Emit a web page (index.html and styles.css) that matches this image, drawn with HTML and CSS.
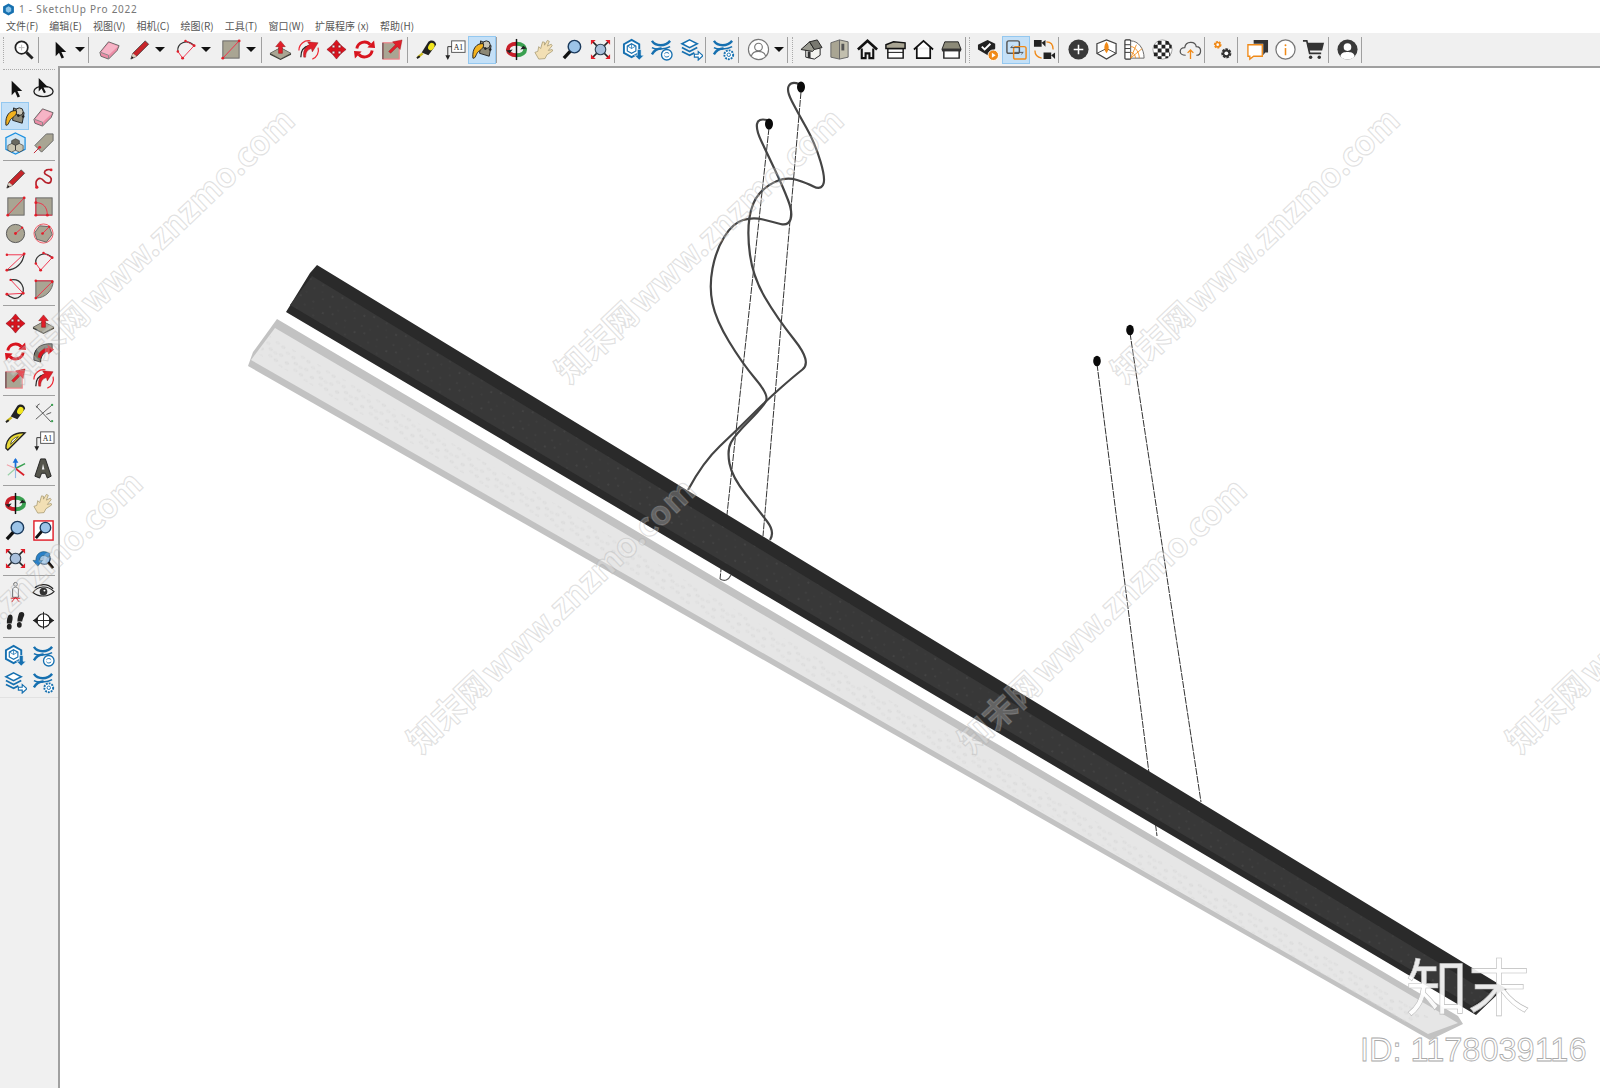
FILE: index.html
```html
<!DOCTYPE html>
<html>
<head>
    <meta charset="utf-8">
    <title>SketchUp Pro 2022</title>
    <link rel="stylesheet" href="styles.css">
</head>

<body>
    <!-- Icon set -->
    <svg class="defs" width="0" height="0">
        <defs>
            <pattern id="speck" width="37" height="19" patternUnits="userSpaceOnUse" patternTransform="rotate(31)">
                <circle cx="3" cy="3" r="0.6" fill="#5e5e5e"/>
                <circle cx="11" cy="9" r="0.5" fill="#525252"/>
                <circle cx="17" cy="2" r="0.4" fill="#6a6a6a"/>
                <circle cx="24" cy="14" r="0.6" fill="#4c4c4c"/>
                <circle cx="31" cy="7" r="0.5" fill="#6e6e6e"/>
                <circle cx="6" cy="16" r="0.4" fill="#555"/>
                <circle cx="20" cy="8" r="0.4" fill="#4a4a4a"/>
                <circle cx="34" cy="17" r="0.5" fill="#5a5a5a"/>
            </pattern>
            <pattern id="holes" width="29" height="15" patternUnits="userSpaceOnUse" patternTransform="rotate(30)">
                <ellipse cx="3" cy="2" rx="2" ry="1" fill="none" stroke="#d4d4d4" stroke-width="0.6"/>
                <ellipse cx="9" cy="3" rx="2" ry="1" fill="none" stroke="#dadada" stroke-width="0.6"/>
                <ellipse cx="15" cy="2" rx="2" ry="1" fill="none" stroke="#d6d6d6" stroke-width="0.6"/>
                <ellipse cx="24" cy="6" rx="2" ry="1" fill="none" stroke="#d2d2d2" stroke-width="0.6"/>
                <ellipse cx="6" cy="8" rx="2" ry="1" fill="none" stroke="#d8d8d8" stroke-width="0.6"/>
                <ellipse cx="13" cy="9" rx="2" ry="1" fill="none" stroke="#d4d4d4" stroke-width="0.6"/>
                <ellipse cx="20" cy="12" rx="2" ry="1" fill="none" stroke="#d8d8d8" stroke-width="0.6"/>
                <ellipse cx="27" cy="13" rx="2" ry="1" fill="none" stroke="#d6d6d6" stroke-width="0.6"/>
            </pattern>
        </defs>
        <symbol id="find" viewBox="0 0 24 24"><circle cx="10" cy="10" r="6.5" fill="#fff" stroke="#222" stroke-width="1.8"/><path d="M15 15l6.500 6.500" stroke="#222" stroke-width="3"/><path d="M10 7v6M7 10h6" stroke="#bbb"/></symbol>
        <symbol id="select" viewBox="0 0 24 24"><path d="M8 4v15l3.500-3.500 2.700 6 2.500-1.200-2.700-5.800H19z" fill="#111"/></symbol>
        <symbol id="eraser" viewBox="0 0 24 24"><path d="M2 15 11 4l11 4-2 5-9 9-8-3z" fill="#ec8ca6" stroke="#666"/><path d="M3 15 11.500 5 21 8.500 11 18z" fill="#f6b4c6"/><path d="M3 15l8 3v4" fill="none" stroke="#888"/></symbol>
        <symbol id="pencil" viewBox="0 0 24 24"><path d="M3 22l2-6L18 3l3.500 3.500L9 19z" fill="#c8252a" stroke="#333" stroke-width="0.8"/><path d="M3 22l2-6 4 3z" fill="#d8d0c0"/><path d="M3 22l1-3 2 1.500z" fill="#111"/></symbol>
        <symbol id="freehand" viewBox="0 0 24 24"><path d="M5 21C2 14 8 9 12 14c3 4 9 4 8-2-1-4-7-3-7-6 0-3 4-4 7-3" fill="none" stroke="#b5202a" stroke-width="1.800"/><circle cx="5" cy="21" r="1.700" fill="#e01f2a"/><circle cx="20" cy="3" r="1.400" fill="#e01f2a"/></symbol>
        <symbol id="rect" viewBox="0 0 24 24"><rect x="4" y="3" width="17" height="18" fill="#a9a593" stroke="#666"/><path d="M4 21 21 3" stroke="#f0304a"/><circle cx="4" cy="21" r="1.500" fill="#e01f2a"/><circle cx="21" cy="3" r="1.500" fill="#e01f2a"/></symbol>
        <symbol id="rrect" viewBox="0 0 24 24"><rect x="4" y="3" width="17" height="18" fill="#a9a593" stroke="#666"/><path d="M4 8c8 0 12 5 12 13M4 3v18h17" fill="none" stroke="#f0304a"/><circle cx="4" cy="8" r="1.500" fill="#e01f2a"/><circle cx="4" cy="21" r="1.500" fill="#e01f2a"/><circle cx="16" cy="21" r="1.500" fill="#e01f2a"/></symbol>
        <symbol id="circle" viewBox="0 0 24 24"><circle cx="12" cy="12" r="9.500" fill="#a9a593" stroke="#555"/><path d="M12 12l7-6" stroke="#f0304a"/><circle cx="12" cy="12" r="1.500" fill="#e01f2a"/><circle cx="19" cy="6" r="1.200" fill="#e01f2a"/></symbol>
        <symbol id="polygon" viewBox="0 0 24 24"><circle cx="12" cy="12" r="10" fill="#f6cfd2" stroke="#f0606a"/><path d="M8 4l10 1 3 8-6 8-10-3-2-7z" fill="#a9a593" stroke="#666"/><path d="M11 12l7-7" stroke="#f0304a"/><circle cx="11" cy="12" r="1.400" fill="#e01f2a"/><circle cx="18" cy="5" r="1.200" fill="#e01f2a"/></symbol>
        <symbol id="arc2" viewBox="0 0 24 24"><path d="M3 21C12 21 20 14 21 4" fill="none" stroke="#333" stroke-width="1.300"/><path d="M3 21 21 4M3 5h18" fill="none" stroke="#f0304a"/><circle cx="3" cy="21" r="1.500" fill="#e01f2a"/><circle cx="21" cy="4" r="1.500" fill="#e01f2a"/><circle cx="3" cy="5" r="1.300" fill="#e01f2a"/></symbol>
        <symbol id="arc3" viewBox="0 0 24 24"><path d="M4 14C3 6 13 0 21 8" fill="none" stroke="#333" stroke-width="1.300"/><path d="M4 14l5 7L21 8 12 3" fill="none" stroke="#f0304a"/><circle cx="9" cy="21" r="1.500" fill="#e01f2a"/><circle cx="21" cy="8" r="1.500" fill="#e01f2a"/><circle cx="4" cy="14" r="1.300" fill="#e01f2a"/><circle cx="12" cy="3" r="1.300" fill="#e01f2a"/></symbol>
        <symbol id="arc4" viewBox="0 0 24 24"><path d="M7 3C18 1 24 13 17 20 13 24 7 22 3 18" fill="none" stroke="#333" stroke-width="1.300"/><path d="M7 3l13 14-17 1" fill="none" stroke="#f0304a"/><circle cx="7" cy="3" r="1.300" fill="#e01f2a"/><circle cx="20" cy="17" r="1.500" fill="#e01f2a"/><circle cx="3" cy="18" r="1.500" fill="#e01f2a"/></symbol>
        <symbol id="pie" viewBox="0 0 24 24"><path d="M4 22V4h18C22 14 14 22 4 22z" fill="#a9a593" stroke="#666"/><path d="M4 22 21 5M4 4h18" stroke="#f0304a"/><circle cx="4" cy="22" r="1.400" fill="#e01f2a"/><circle cx="4" cy="4" r="1.400" fill="#e01f2a"/><circle cx="21" cy="5" r="1.400" fill="#e01f2a"/></symbol>
        <symbol id="pushpull" viewBox="0 0 24 24"><path d="M1 16l11-6 11 6v1.500L12 23 1 17.500z" fill="#3e3e36"/><path d="M1 16l11-6 11 6-11 6z" fill="#a9a593" stroke="#444" stroke-width="0.500"/><path d="M12 3l-5 6h3v7h4V9h3z" fill="#e01f2a" stroke="#811" stroke-width="0.500"/></symbol>
        <symbol id="follow" viewBox="0 0 24 24"><path d="M2 13A10 10 0 0 1 14 3M22 10A10 10 0 0 1 16 22" fill="none" stroke="#ee2a35" stroke-width="1.300"/><path d="M4 20C4 14 7 9 13 8" fill="none" stroke="#222" stroke-width="1.300"/><path d="M9 20c0-5 2-8 6-9l1 3.500L22 5 11 4l2 3c-5 2-7 7-6 13z" fill="#e01f2a" stroke="#811" stroke-width="0.400"/></symbol>
        <symbol id="move" viewBox="0 0 24 24"><path d="M12 2l4.500 5.500h-2.700v2.700h2.700V7.500L22 12l-5.500 4.500v-2.700h-2.700v2.700h2.700L12 22l-4.500-5.500h2.700v-2.700H7.500v2.700L2 12l5.500-4.500v2.700h2.700V7.500H7.500z" fill="#d8141e" stroke="#701" stroke-width="0.500"/></symbol>
        <symbol id="rotate" viewBox="0 0 24 24"><path d="M4 11A8 8 0 0 1 18 7M20 13A8 8 0 0 1 6 17" fill="none" stroke="#d8141e" stroke-width="3"/><path d="M15 10l8 .5-1-8zM9 14l-8-.5 1 8z" fill="#d8141e"/></symbol>
        <symbol id="scale" viewBox="0 0 24 24"><rect x="2" y="5" width="17" height="17" fill="#a9a593" stroke="#f08088" stroke-width="1.200"/><path d="M2 5v17" stroke="#333"/><path d="M8 14l7-7-3-3 10-2-2 10-3-3-7 7z" fill="#e01f2a" stroke="#811" stroke-width="0.400"/></symbol>
        <symbol id="tape" viewBox="0 0 24 24"><path d="M7 15 14 4c3-3 8-1 8 3l-8 11z" fill="#222"/><ellipse cx="17" cy="9" rx="3" ry="4" transform="rotate(30 17 9)" fill="#f2e61e"/><path d="M8 16l-5 4" stroke="#c8b818" stroke-width="2.500"/><path d="M2 21l3-2" stroke="#222" stroke-width="2"/></symbol>
        <symbol id="label" viewBox="0 0 24 24"><rect x="9" y="3" width="14" height="12" fill="#fff" stroke="#555"/><text x="16" y="12" font-family="Liberation Serif, serif" font-size="8" text-anchor="middle" fill="#222">A1</text><path d="M9 9H5v10" fill="none" stroke="#333"/><path d="M2.500 18h5L5 23z" fill="#222"/></symbol>
        <symbol id="paint" viewBox="0 0 24 24"><path d="M10 3l11 5-2 11-10-3z" fill="#8c8876" stroke="#222"/><circle cx="16" cy="7" r="4" fill="#c8c4b4" stroke="#222"/><circle cx="15" cy="11" r="1.400" fill="#222"/><circle cx="20" cy="12" r="1.400" fill="#222"/><path d="M13 6C6 5 1 11 2 21c3 1 3-5 6-7 2-1.500 6-4 5-8z" fill="#f2b21e" stroke="#222"/></symbol>
        <symbol id="orbit" viewBox="0 0 24 24"><path d="M12 6C6 6 3 9 3 12s3 6 9 6" fill="none" stroke="#c8202a" stroke-width="4"/><path d="M12 6c6 0 9 3 9 6s-3 6-9 6" fill="none" stroke="#3aa050" stroke-width="4"/><path d="M12 1v22" stroke="#111" stroke-width="1.500"/><path d="M1 13l4 3 3-4zM23 11l-4-3-3 4z" fill="#222"/></symbol>
        <symbol id="hand" viewBox="0 0 24 24"><path d="M6 22 2 15l3-1 1-5 2 2 2-7 2 .5 0 3 3-5 2 1-2 5 4-2 1 1.500-4 5 4-1 .5 1.500-6 4-2 4z" fill="#f2dfb4" stroke="#a89a70" stroke-width="0.800"/></symbol>
        <symbol id="zoom" viewBox="0 0 24 24"><circle cx="14" cy="9" r="6.500" fill="#9cc4e8" stroke="#1b3a5c" stroke-width="1.500"/><path d="M9.500 14 3 21" stroke="#111" stroke-width="3.500"/></symbol>
        <symbol id="zoomwin" viewBox="0 0 24 24"><rect x="2" y="2" width="20" height="20" fill="#fff" stroke="#e01f2a" stroke-width="1.500"/><circle cx="14" cy="9" r="5.500" fill="#9cc4e8" stroke="#1b3a5c" stroke-width="1.400"/><path d="M10 13 4 20" stroke="#111" stroke-width="3"/></symbol>
        <symbol id="extents" viewBox="0 0 24 24"><path d="M3 3l18 18M21 3 3 21" stroke="#222" stroke-width="1.500"/><circle cx="12" cy="12" r="5.500" fill="#a8c0dc" stroke="#345" stroke-width="1.200"/><path d="M2 2h5L2 7zM22 2h-5l5 5zM2 22h5l-5-5zM22 22h-5l5-5z" fill="#e01f2a"/></symbol>
        <symbol id="prev" viewBox="0 0 24 24"><circle cx="13" cy="12" r="6" fill="#9cc4e8" stroke="#1b3a5c" stroke-width="1.300"/><path d="M17 16l5 6" stroke="#111" stroke-width="3"/><path d="M4 14C4 6 11 2 19 7l-2 4C12 7 8 9 8 14h3l-5 6-5-6z" fill="#2a80c8" stroke="#145" stroke-width="0.500"/></symbol>
        <symbol id="shield" viewBox="0 0 24 24"><path d="M10 2l8 4.500v9L10 20l-8-4.500v-9z" fill="#fff" stroke="#1670b0" stroke-width="2"/><path d="M10 6l4.500 2.500v5L10 16l-4.500-2.500v-5z" fill="none" stroke="#1670b0" stroke-width="1.200"/><path d="M10 11V6M10 11l4-2.500M10 11l-4-2.500" stroke="#1670b0" stroke-width="0.800"/><path d="M16 12h4v6h3l-5 5-5-5h3z" fill="#1670b0" stroke="#fff" stroke-width="0.600"/></symbol>
        <symbol id="xsync" viewBox="0 0 24 24"><path d="M2 3c4 6 14 6 19 0M2 17c3-5 7-6 10-6" fill="none" stroke="#1670b0" stroke-width="2.500"/><path d="M2 10c4 2 6 2 9 1 3 1 6 0 10-2" fill="none" stroke="#1670b0" stroke-width="1.600"/><circle cx="17.500" cy="17.500" r="5.500" fill="#fff" stroke="#1670b0" stroke-width="1.400"/><path d="M15 16.500a3 3 0 0 1 5 0M20 18.500a3 3 0 0 1-5 0" fill="none" stroke="#1670b0"/></symbol>
        <symbol id="xgear" viewBox="0 0 24 24"><path d="M2 3c4 6 14 6 19 0M2 17c3-5 7-6 10-6" fill="none" stroke="#1670b0" stroke-width="2.500"/><path d="M2 10c4 2 6 2 9 1 3 1 6 0 10-2" fill="none" stroke="#1670b0" stroke-width="1.600"/><circle cx="17.500" cy="17.500" r="4.600" fill="#fff" stroke="#1670b0" stroke-width="2" stroke-dasharray="2 1"/><circle cx="17.500" cy="17.500" r="1.800" fill="#fff" stroke="#1670b0"/></symbol>
        <symbol id="layers" viewBox="0 0 24 24"><path d="M10 2l8 4-8 4-8-4z" fill="#fff" stroke="#1670b0" stroke-width="1.600"/><path d="M2 10l8 4 8-4M2 14l8 4 5-2.500" fill="none" stroke="#1670b0" stroke-width="1.800"/><path d="M15 17h4v-3l5 4.500-5 4.500v-3h-4z" fill="#fff" stroke="#1670b0" stroke-width="1.200"/></symbol>
        <symbol id="user" viewBox="0 0 24 24"><circle cx="12" cy="12" r="10.500" fill="#fff" stroke="#777" stroke-width="1.200"/><circle cx="12" cy="9.500" r="4" fill="none" stroke="#777" stroke-width="1.200"/><path d="M4.500 19c1-4 4-5 7.500-5s6.500 1 7.500 5" fill="none" stroke="#777" stroke-width="1.200"/></symbol>
        <symbol id="house3d" viewBox="0 0 24 24"><path d="M6 12v8l9 2 6-4v-7l-7-6z" fill="#f4f4f0" stroke="#222"/><path d="M1 12 10 4l5 8-2 2z" fill="#9a9a90" stroke="#222"/><path d="M10 4l8-2 5 8-8 2z" fill="#787870" stroke="#222"/><path d="M8 14h3v7H8z" fill="#333"/></symbol>
        <symbol id="book" viewBox="0 0 24 24"><path d="M3 5l9-3v20l-9-2z" fill="#a9a593" stroke="#666"/><path d="M12 2l9 2v16l-9 2z" fill="#c2bfae" stroke="#666"/><rect x="14" y="6" width="3" height="7" fill="#555"/></symbol>
        <symbol id="home" viewBox="0 0 24 24"><path d="M2 12 12 3l10 9" fill="none" stroke="#111" stroke-width="2.800"/><path d="M6 11v10h4v-5h4v5h4V11" fill="none" stroke="#111" stroke-width="2.200"/></symbol>
        <symbol id="boxroof" viewBox="0 0 24 24"><path d="M4 11h16v10H4z" fill="#fff" stroke="#111" stroke-width="1.500"/><path d="M2 7l8-3 12 1v6H2z" fill="#a9a593" stroke="#111" stroke-width="1.500"/><path d="M4 15h16" stroke="#111"/></symbol>
        <symbol id="homeo" viewBox="0 0 24 24"><path d="M2 12 12 3l10 9M5 10v11h14V10" fill="#fff" stroke="#111" stroke-width="1.800"/></symbol>
        <symbol id="store" viewBox="0 0 24 24"><path d="M4 12h16v9H4z" fill="#fff" stroke="#222" stroke-width="1.500"/><path d="M5 4h14l3 8H2z" fill="#8c8a78" stroke="#222"/><rect x="2" y="11" width="20" height="3" fill="#333"/></symbol>
        <symbol id="style" viewBox="0 0 24 24"><path d="M1 7l10-5 8 4v5l-6 8-12-7z" fill="#222"/><path d="M5 9l3 3 6-6" fill="none" stroke="#fff" stroke-width="2"/><circle cx="17" cy="18" r="5.500" fill="#f08a18" stroke="#fff"/><path d="M15.500 15.500v5l4-2.500z" fill="#fff"/></symbol>
        <symbol id="swap" viewBox="0 0 24 24"><rect x="2" y="3" width="13" height="13" rx="2" fill="none" stroke="#555" stroke-width="1.500"/><rect x="9" y="9" width="13" height="13" rx="2" fill="none" stroke="#f08a18" stroke-width="1.500"/><path d="M6 10h9M6 10l2-2M19 15h-9M19 15l-2 2" fill="none" stroke="#555"/></symbol>
        <symbol id="cams" viewBox="0 0 24 24"><path d="M1 2h8v7H1zM9 5l4-3v7z" fill="#222"/><path d="M11 15h8v7h-8zM19 18l4-3v7z" fill="#222"/><path d="M14 4c5 0 7 3 7 8M9 21c-5-1-7-4-7-8" fill="none" stroke="#f08a18" stroke-width="1.400"/></symbol>
        <symbol id="plus" viewBox="0 0 24 24"><circle cx="12" cy="12" r="10.500" fill="#3a3a3a"/><path d="M12 7v10M7 12h10" stroke="#fff" stroke-width="1.600"/></symbol>
        <symbol id="hexo" viewBox="0 0 24 24"><path d="M2 6l10-4 10 4v10l-10 6-10-6z" fill="#fff" stroke="#444" stroke-width="1.300"/><path d="M2 16l10-5 10 5" fill="none" stroke="#444"/><path d="M12 4c3 4 3 8 0 12-3-4-3-8 0-12z" fill="#f08a18"/></symbol>
        <symbol id="fan" viewBox="0 0 24 24"><rect x="2" y="2" width="6" height="20" rx="1" fill="#fff" stroke="#333" stroke-width="1.200"/><path d="M2 7h6M2 11h6M2 15h6" stroke="#333"/><path d="M8 3c8 0 14 8 14 18H8z" fill="#fff" stroke="#666"/><path d="M8 9c5 0 9 6 9 12M8 15c3 0 5 3 5 6M8 21l12-10M8 21l6-14" fill="none" stroke="#f08a18" stroke-width="0.900"/></symbol>
        <symbol id="checker" viewBox="0 0 24 24"><circle cx="12" cy="12" r="10" fill="#fff" stroke="#555" stroke-width="0.500"/><path d="M7 3h4v4H7zM15 3h3l2 4h-5zM3 7h4v4H3zM11 7h4v4h-4zM19 7h2.500v4H19zM7 11h4v4H7zM15 11h4v4h-4zM3 15h4v4H3zM11 15h4v4h-4zM19 15h1v4h-1zM7 19h4v3H7zM15 19h3v2h-3z" fill="#222"/></symbol>
        <symbol id="cloud" viewBox="0 0 24 24"><path d="M7 18c-8 0-7-8-1-8 1-7 11-7 12-1 6 0 6 9 0 9" fill="none" stroke="#555" stroke-width="1.300"/><path d="M12 22v-9M9 15.500l3-3 3 3" fill="none" stroke="#f08a18" stroke-width="1.400"/></symbol>
        <symbol id="gears" viewBox="0 0 24 24"><circle cx="7" cy="7" r="3" fill="#f08a18" stroke="#f08a18" stroke-width="2" stroke-dasharray="2 1"/><circle cx="7" cy="7" r="1.400" fill="#fff"/><circle cx="16" cy="16" r="4" fill="#333" stroke="#333" stroke-width="2.600" stroke-dasharray="2.500 1"/><circle cx="16" cy="16" r="2" fill="#fff"/></symbol>
        <symbol id="chat" viewBox="0 0 24 24"><path d="M8 2h15v13h-3l-2 3V6H8z" fill="#333"/><path d="M2 7h15v12H8l-4 3v-3H2z" fill="#fff" stroke="#f08a18" stroke-width="1.400"/></symbol>
        <symbol id="info" viewBox="0 0 24 24"><circle cx="12" cy="12" r="10" fill="#fff" stroke="#777" stroke-width="1.300"/><path d="M12 10.500V18" stroke="#f08a18" stroke-width="1.600"/><circle cx="12" cy="7.500" r="1" fill="#f08a18"/></symbol>
        <symbol id="cart" viewBox="0 0 24 24"><path d="M1 3h4l3 13h12" fill="none" stroke="#333" stroke-width="1.800"/><path d="M5 5h18l-2 8H7z" fill="#333"/><circle cx="9" cy="20" r="1.800" fill="#333"/><circle cx="18" cy="20" r="1.800" fill="#333"/></symbol>
        <symbol id="avatar" viewBox="0 0 24 24"><circle cx="12" cy="12" r="10.500" fill="#3a3a3a"/><circle cx="12" cy="9.500" r="4" fill="#fff"/><path d="M4.500 19c1-4 4-4.500 7.500-4.500s6.500.5 7.500 4.500a10 10 0 0 1-15 0z" fill="#fff"/></symbol>
        <symbol id="orbsel" viewBox="0 0 24 24"><ellipse cx="12" cy="15" rx="10" ry="5.500" fill="none" stroke="#222" stroke-width="1.400"/><path d="M7 1v14l3-3 2.500 5 2-1-2.500-5h5z" fill="#111"/></symbol>
        <symbol id="comp" viewBox="0 0 24 24"><path d="M12 1l10 5v12l-10 5-10-5V6z" fill="#d4e8f4" stroke="#1c90e0" stroke-width="1.300"/><path d="M8 9l4-2 4 2v5l-4 2-4-2z" fill="#6a6a60" stroke="#222" stroke-width="0.600"/><path d="M4 14l4-2 4 2v5l-4 2-4-2zM12 14l4-2 4 2v5l-4 2-4-2z" fill="#c8c4b0" stroke="#222" stroke-width="0.600"/></symbol>
        <symbol id="tag" viewBox="0 0 24 24"><path d="M15 2h7v7L10 21 3 14z" fill="#a9a593" stroke="#666"/><path d="M2 22l6-6" stroke="#c02030"/><circle cx="8" cy="16" r="1.500" fill="#e01f2a"/></symbol>
        <symbol id="thick" viewBox="0 0 24 24"><path d="M2 21C1 10 8 3 21 4v7c-7 0-12 4-12 12z" fill="#77776c" stroke="#222"/><path d="M6 18C7 12 11 9 17 8l-1-3 7 5-6 5-1-3c-4 1-6 3-7 7z" fill="#d8141e"/></symbol>
        <symbol id="dim" viewBox="0 0 24 24"><path d="M4 4l16 17M21 3 4 18" stroke="#333" stroke-width="0.800"/><path d="M8 2a4 4 0 0 0-3 4M15 13l5-2" fill="none" stroke="#555"/><circle cx="21" cy="3" r="1.200" fill="#38a050"/><circle cx="21" cy="20" r="1.200" fill="#38a050"/></symbol>
        <symbol id="proto" viewBox="0 0 24 24"><path d="M2 20C2 10 10 3 22 4L4 22z" fill="#e8d838" stroke="#222" stroke-width="1.400"/><path d="M7 15C8 11 11 9 15 8L7 16z" fill="#fff" stroke="#222" stroke-width="0.700"/></symbol>
        <symbol id="axes" viewBox="0 0 24 24"><path d="M12 12V2" stroke="#1870d8" stroke-width="1.800"/><path d="M12 12l10-5" stroke="#38a050" stroke-width="1.500"/><path d="M12 12l9 7" stroke="#d8202a" stroke-width="1.800"/><path d="M12 12 3 8" stroke="#f0a0a8" stroke-width="1.200"/><path d="M12 12 4 19" stroke="#98d0a8" stroke-width="1.200"/><path d="M12 12v10" stroke="#98b8e0" stroke-width="1.200"/><path d="M9 6l3-5 3 5z" fill="#1870d8"/></symbol>
        <symbol id="text3d" viewBox="0 0 24 24"><path d="M9 2h5l6 18-4 2-2-5h-4l-2 5-5-2z" fill="#55554c" stroke="#222"/><path d="M11.500 7l-1.200 6h2.700z" fill="#f0f0f0"/></symbol>
        <symbol id="figure" viewBox="0 0 24 24"><circle cx="12" cy="3.500" r="2" fill="none" stroke="#666"/><path d="M9 8c2-2 4-2 6 0v9H9z" fill="#f4f4f4" stroke="#666"/><path d="M8 22l4-5 4 5M7 18h10" fill="none" stroke="#e01f2a"/></symbol>
        <symbol id="eye" viewBox="0 0 24 24"><path d="M1 12C6 5 16 4 23 11 17 17 7 17 1 12z" fill="#eee" stroke="#222" stroke-width="1.200"/><circle cx="12" cy="11" r="4" fill="#333"/><circle cx="13" cy="10" r="1" fill="#fff"/><path d="M3 7c5-4 13-5 19 1" fill="none" stroke="#222" stroke-width="1.400"/></symbol>
        <symbol id="feet" viewBox="0 0 24 24"><path d="M4 8c1-3 5-3 5 1 0 3-1 5-1 6H3C3 13 3 10 4 8z" fill="#222"/><ellipse cx="5.500" cy="18.500" rx="2.500" ry="3" fill="#222"/><path d="M16 4c3-2 6 0 5 3-1 2-2 5-2 6h-5c0-3 1-7 2-9z" fill="#222"/><ellipse cx="16" cy="16.500" rx="2.500" ry="3" fill="#222"/></symbol>
        <symbol id="section" viewBox="0 0 24 24"><circle cx="12" cy="12" r="7" fill="#fff" stroke="#222" stroke-width="1.200"/><path d="M1 12h22M12 3v18" stroke="#222"/><path d="M18 8l5 4-5 4zM6 8l-5 4 5 4z" fill="#222"/></symbol>
        <symbol id="logo" viewBox="0 0 24 24"><path d="M12 1l10 5.500v11L12 23 2 17.500v-11z" fill="#1670b0"/><path d="M12 6l5 3v6l-5 3-5-3V9z" fill="#8cc4e8"/></symbol>
    </svg>

    <div class="titlebar">
        <svg class="logo"><use href="#logo"/></svg>
        <span>1 - SketchUp Pro 2022</span>
    </div>

    <nav class="menubar">
        <span>文件(F)</span>
        <span>编辑(E)</span>
        <span>视图(V)</span>
        <span>相机(C)</span>
        <span>绘图(R)</span>
        <span>工具(T)</span>
        <span>窗口(W)</span>
        <span>扩展程序 (x)</span>
        <span>帮助(H)</span>
    </nav>

    <!-- Top toolbar -->
    <div class="toolbar">
        <i class="grip"></i>
        <div class="tool"><svg><use href="#find"/></svg></div>
        <i class="sep sep-t"></i>
        <div class="tool ml2"><svg><use href="#select"/></svg></div>
        <div class="drop"></div>
        <i class="sep sep-t"></i>
        <div class="tool ml2"><svg><use href="#eraser"/></svg></div>
        <div class="tool ml2"><svg><use href="#pencil"/></svg></div>
        <div class="drop"></div>
        <div class="tool ml4"><svg><use href="#arc3"/></svg></div>
        <div class="drop"></div>
        <div class="tool ml3"><svg><use href="#rect"/></svg></div>
        <div class="drop"></div>
        <i class="sep"></i>
        <div class="tool"><svg><use href="#pushpull"/></svg></div>
        <div class="tool"><svg><use href="#follow"/></svg></div>
        <div class="tool"><svg><use href="#move"/></svg></div>
        <div class="tool"><svg><use href="#rotate"/></svg></div>
        <div class="tool"><svg><use href="#scale"/></svg></div>
        <i class="sep sep-t"></i>
        <div class="tool"><svg><use href="#tape"/></svg></div>
        <div class="tool"><svg><use href="#label"/></svg></div>
        <div class="tool active"><svg><use href="#paint"/></svg></div>
        <i class="sep sep-n"></i>
        <div class="tool ml2"><svg><use href="#orbit"/></svg></div>
        <div class="tool"><svg><use href="#hand"/></svg></div>
        <div class="tool"><svg><use href="#zoom"/></svg></div>
        <div class="tool"><svg><use href="#extents"/></svg></div>
        <i class="sep sep-n"></i>
        <div class="tool ml1"><svg><use href="#shield"/></svg></div>
        <div class="tool"><svg><use href="#xsync"/></svg></div>
        <div class="tool ml2"><svg><use href="#layers"/></svg></div>
        <i class="sep sep-n"></i>
        <div class="tool"><svg><use href="#xgear"/></svg></div>
        <i class="sep sep-t"></i>
        <div class="tool ml1"><svg><use href="#user"/></svg></div>
        <div class="drop"></div>
        <i class="sep sep-t"></i>
        <i class="grip grip-m"></i>
        <div class="tool"><svg><use href="#house3d"/></svg></div>
        <div class="tool"><svg><use href="#book"/></svg></div>
        <div class="tool"><svg><use href="#home"/></svg></div>
        <div class="tool"><svg><use href="#boxroof"/></svg></div>
        <div class="tool"><svg><use href="#homeo"/></svg></div>
        <div class="tool"><svg><use href="#store"/></svg></div>
        <i class="sep sep-n"></i>
        <i class="grip grip-m"></i>
        <div class="tool"><svg><use href="#style"/></svg></div>
        <div class="tool active"><svg><use href="#swap"/></svg></div>
        <div class="tool"><svg><use href="#cams"/></svg></div>
        <i class="sep sep-n"></i>
        <div class="tool ml2"><svg><use href="#plus"/></svg></div>
        <div class="tool"><svg><use href="#hexo"/></svg></div>
        <div class="tool"><svg><use href="#fan"/></svg></div>
        <div class="tool"><svg><use href="#checker"/></svg></div>
        <div class="tool"><svg><use href="#cloud"/></svg></div>
        <i class="sep sep-n"></i>
        <div class="tool"><svg><use href="#gears"/></svg></div>
        <i class="sep sep-t"></i>
        <div class="tool ml1"><svg><use href="#chat"/></svg></div>
        <div class="tool"><svg><use href="#info"/></svg></div>
        <div class="tool"><svg><use href="#cart"/></svg></div>
        <i class="sep sep-t"></i>
        <div class="tool"><svg><use href="#avatar"/></svg></div>
        <i class="sep sep-n"></i>
    </div>

    <div class="workspace">
        <!-- Left toolbar -->
        <aside class="sidebar">
            <div class="side-grip"></div>
            <div class="side-set">
                <div class="side-group">
                    <div class="tool"><svg><use href="#select"/></svg></div>
                    <div class="tool"><svg><use href="#orbsel"/></svg></div>
                    <div class="tool active"><svg><use href="#paint"/></svg></div>
                    <div class="tool"><svg><use href="#eraser"/></svg></div>
                    <div class="tool"><svg><use href="#comp"/></svg></div>
                    <div class="tool"><svg><use href="#tag"/></svg></div>
                </div>
                <hr>
                <div class="side-group">
                    <div class="tool"><svg><use href="#pencil"/></svg></div>
                    <div class="tool"><svg><use href="#freehand"/></svg></div>
                    <div class="tool"><svg><use href="#rect"/></svg></div>
                    <div class="tool"><svg><use href="#rrect"/></svg></div>
                    <div class="tool"><svg><use href="#circle"/></svg></div>
                    <div class="tool"><svg><use href="#polygon"/></svg></div>
                    <div class="tool"><svg><use href="#arc2"/></svg></div>
                    <div class="tool"><svg><use href="#arc3"/></svg></div>
                    <div class="tool"><svg><use href="#arc4"/></svg></div>
                    <div class="tool"><svg><use href="#pie"/></svg></div>
                </div>
                <hr>
                <div class="side-group">
                    <div class="tool"><svg><use href="#move"/></svg></div>
                    <div class="tool"><svg><use href="#pushpull"/></svg></div>
                    <div class="tool"><svg><use href="#rotate"/></svg></div>
                    <div class="tool"><svg><use href="#thick"/></svg></div>
                    <div class="tool"><svg><use href="#scale"/></svg></div>
                    <div class="tool"><svg><use href="#follow"/></svg></div>
                </div>
                <hr>
                <div class="side-group">
                    <div class="tool"><svg><use href="#tape"/></svg></div>
                    <div class="tool"><svg><use href="#dim"/></svg></div>
                    <div class="tool"><svg><use href="#proto"/></svg></div>
                    <div class="tool"><svg><use href="#label"/></svg></div>
                    <div class="tool"><svg><use href="#axes"/></svg></div>
                    <div class="tool"><svg><use href="#text3d"/></svg></div>
                </div>
                <hr>
                <div class="side-group">
                    <div class="tool"><svg><use href="#orbit"/></svg></div>
                    <div class="tool"><svg><use href="#hand"/></svg></div>
                    <div class="tool"><svg><use href="#zoom"/></svg></div>
                    <div class="tool"><svg><use href="#zoomwin"/></svg></div>
                    <div class="tool"><svg><use href="#extents"/></svg></div>
                    <div class="tool"><svg><use href="#prev"/></svg></div>
                </div>
                <hr>
                <div class="side-group">
                    <div class="tool"><svg><use href="#figure"/></svg></div>
                    <div class="tool"><svg><use href="#eye"/></svg></div>
                    <div class="tool"><svg><use href="#feet"/></svg></div>
                    <div class="tool"><svg><use href="#section"/></svg></div>
                </div>
                <hr>
                <div class="side-group">
                    <div class="tool"><svg><use href="#shield"/></svg></div>
                    <div class="tool"><svg><use href="#xsync"/></svg></div>
                    <div class="tool"><svg><use href="#layers"/></svg></div>
                    <div class="tool"><svg><use href="#xgear"/></svg></div>
                </div>
            </div>
        </aside>

        <!-- Model view, viewBox keeps page coordinates -->
        <svg class="canvas" viewBox="60 68 1540 1020">
            <line class="cord" x1="769" y1="128" x2="720" y2="579"/>
            <line class="cord" x1="801" y1="92" x2="763" y2="536"/>
            <line class="cord" x1="1097" y1="364" x2="1157" y2="836"/>
            <line class="cord" x1="1130" y1="333" x2="1201" y2="802"/>
            <path class="wire-thin" d="M720 579Q727 583 731 575"/>

            <!-- Light profile -->
            <polygon class="light-edge" points="277,319 1458,1016 1463,1024 1430,1040 248,366 253,352"/>
            <polygon class="light-face" points="275,328 1458,1023 1428,1034 251,360"/>
            <polygon class="light-holes" points="270,336 1430,1018 1405,1022 258,354"/>

            <!-- Dark profile -->
            <polygon class="dark-edge" points="317,265 1507,989 1500,992 1476,1015 286,312 310,273"/>
            <polygon class="dark-face" points="312,276 1490,994 1472,1006 290,305"/>
            <polygon class="dark-speck" points="312,276 1490,994 1472,1006 290,305"/>

            <path class="wire" d="M799 84Q792 81 789 85.500Q786 90 792 101.500Q798 113 806.500 128Q815 143 820.500 161.500Q826 180 823 185Q820 190 813.500 186.500Q807 183 797 180Q787 177 777 181Q767 185 759.500 193.500Q752 202 749.500 217.500Q747 233 750 255Q753 277 765 297.500Q777 318 794.500 340Q812 362 802.500 369.500Q793 377 780 388.500Q767 400 752 415Q737 430 720 446Q703 462 688 490"/>
            <path class="wire" d="M767 120Q758 118 757 124Q756 130 761.500 141.500Q767 153 775 170Q783 187 788 200Q793 213 790.500 219.500Q788 226 780.500 224Q773 222 763 219.500Q753 217 743 220Q733 223 724.500 236.500Q716 250 712.500 268.500Q709 287 712.500 303.500Q716 320 729 341.500Q742 363 755.500 379Q769 395 766 401Q763 407 749 421Q735 435 731 442.500Q727 450 729.500 463.500Q732 477 746 494.500Q760 512 767.500 522Q775 532 770 540"/>

            <ellipse class="bulb" cx="769" cy="124" rx="4" ry="5.500"/>
            <ellipse class="bulb" cx="801" cy="87" rx="4" ry="5.500"/>
            <ellipse class="bulb" cx="1097" cy="361" rx="3.800" ry="5.200"/>
            <ellipse class="bulb" cx="1130" cy="330" rx="3.800" ry="5.200"/>
        </svg>
    </div>

    <!-- Watermark over the whole shot -->
    <svg class="overlay" viewBox="0 0 1600 1088">
        <g class="mark">
            <text transform="translate(20 385) rotate(-43.400)">知末网 www.znzmo.com</text>
            <text transform="translate(569 385) rotate(-43.400)">知末网 www.znzmo.com</text>
            <text transform="translate(1125 385) rotate(-43.400)">知末网 www.znzmo.com</text>
            <text transform="translate(-132 748) rotate(-43.400)">知末网 www.znzmo.com</text>
            <text transform="translate(421 755) rotate(-43.400)">知末网 www.znzmo.com</text>
            <text transform="translate(972 755) rotate(-43.400)">知末网 www.znzmo.com</text>
            <text transform="translate(1520 755) rotate(-43.400)">知末网 www.znzmo.com</text>
        </g>
        <text class="brand" x="1406" y="1011">知末</text>
        <text class="shot-id" x="1360" y="1061">ID: 1178039116</text>
    </svg>
</body>
</html>
```

FILE: styles.css
```css
body {
    margin: 0;
    width: 1600px;
    height: 1088px;
    overflow: hidden;
    position: relative;
    display: flex;
    flex-direction: column;
    font-family: "Noto Sans", "Noto Sans CJK SC", sans-serif;
    background-color: #fff;
}

.defs {
    position: absolute;
}

.titlebar {
    height: 18px;
    flex: none;
    display: flex;
    align-items: center;
    padding-left: 2px;
    font-size: 10px;
    line-height: 14px;
    letter-spacing: 0.75px;
    color: #777;
}

.logo {
    width: 13px;
    height: 13px;
    margin-right: 4px;
}

.menubar {
    height: 15px;
    flex: none;
    display: flex;
    align-items: center;
    gap: 11px;
    padding-left: 6px;
    font-family: "Noto Sans CJK SC", "Noto Sans", sans-serif;
    font-size: 10px;
    color: #555;
}

.toolbar {
    height: 33px;
    flex: none;
    display: flex;
    align-items: center;
    background-color: #f0f0f0;
}

.tool {
    width: 28px;
    height: 28px;
    flex: none;
    box-sizing: border-box;
    display: flex;
    align-items: center;
    justify-content: center;
}

.tool svg {
    width: 23px;
    height: 23px;
}

.tool.active {
    background-color: #c4e0f7;
    border: 1px solid #94c8f0;
}

.drop {
    width: 14px;
    height: 28px;
    flex: none;
    display: flex;
    align-items: center;
    justify-content: center;
}

.drop::after {
    content: "";
    border-left: 5px solid transparent;
    border-right: 5px solid transparent;
    border-top: 5px solid #111;
}

.grip {
    width: 1px;
    height: 26px;
    margin: 0 4px 0 3px;
    flex: none;
    border-left: 1px dotted #aaa;
}

.grip-m {
    margin: 0 3px 0 0;
}

.sep {
    width: 1px;
    height: 26px;
    margin: 0 4px 0 3px;
    flex: none;
    background-color: #a0a0a0;
}

.sep-t {
    margin: 0 4px 0 1px;
}

.sep-n {
    margin: 0 3px 0 0;
}

.ml1 { margin-left: 1px; }
.ml2 { margin-left: 2px; }
.ml3 { margin-left: 3px; }
.ml4 { margin-left: 4px; }

.workspace {
    flex: 1;
    min-height: 0;
    display: flex;
}

.sidebar {
    width: 60px;
    flex: none;
    box-sizing: border-box;
    background-color: #f0f0f0;
    border-right: 2px solid #a0a0a0;
}

.side-grip {
    height: 3px;
    margin: 3px 3px 2px;
    border-top: 1px dotted #aaa;
}

.side-set {
    padding: 0 1px 1px;
    border-bottom: 1px solid #e2e2e2;
}

.side-group {
    display: grid;
    grid-template-columns: 28px 28px;
    grid-auto-rows: 27.6px;
}

.side-group .tool {
    align-self: center;
}

.side-set hr {
    margin: 2.5px 2px 3.5px;
    height: 1px;
    border: none;
    background-color: #a0a0a0;
}

.canvas {
    flex: 1;
    min-width: 0;
    display: block;
    border-top: 2px solid #a0a0a0;
    background-color: #fff;
}

.cord {
    stroke: #333;
    stroke-width: 1;
    stroke-dasharray: 7 1;
}

.wire {
    fill: none;
    stroke: #444;
    stroke-width: 2.2;
}

.wire-thin {
    fill: none;
    stroke: #555;
    stroke-width: 1.2;
}

.bulb {
    fill: #0a0a0a;
}

.light-edge { fill: #c2c2c2; }
.light-face { fill: #e6e6e6; }
.light-holes { fill: url(#holes); }
.dark-edge { fill: #2a2a2a; }
.dark-face { fill: #383838; }
.dark-speck { fill: url(#speck); }

.overlay {
    position: absolute;
    left: 0;
    top: 0;
    width: 1600px;
    height: 1088px;
    pointer-events: none;
}

.mark text {
    font-family: "Noto Sans CJK SC", "Noto Sans", sans-serif;
    font-size: 33px;
    font-weight: 700;
    word-spacing: -5px;
    fill: #fff;
    fill-opacity: 0.22;
    stroke: #aaa;
    stroke-opacity: 0.35;
    stroke-width: 1.2;
}

.brand {
    font-family: "Noto Sans CJK SC", sans-serif;
    font-size: 62px;
    fill: #fff;
    fill-opacity: 0.9;
    stroke: #bbb;
    stroke-width: 0.6;
}

.shot-id {
    font-family: "Liberation Sans", sans-serif;
    font-size: 32.5px;
    fill: #fff;
    stroke: #aaa;
    stroke-width: 0.8;
}
```
